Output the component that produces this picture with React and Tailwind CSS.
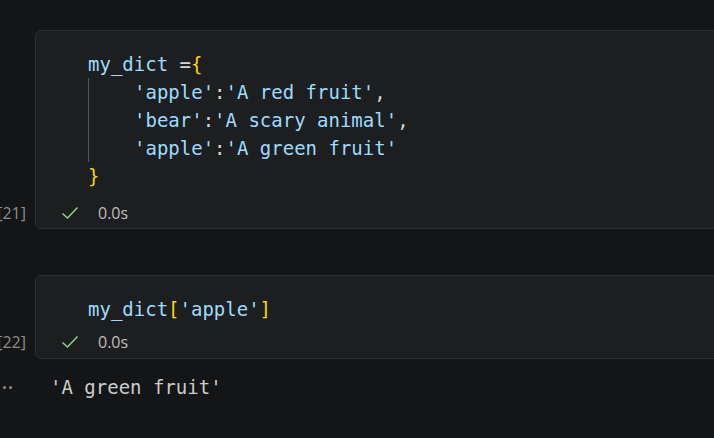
import React from "react";

const mono = { fontFamily: '"DejaVu Sans Mono", monospace' };

function Check() {
  return (
    <svg width="18" height="14" viewBox="0 0 18 14" fill="none">
      <path d="M1.5 7.5 L6.5 12 L16.5 1.5" stroke="#89d185" strokeWidth="1.6" />
    </svg>
  );
}

function Status({ count }) {
  return (
    <div className="flex items-center h-[24px]">
      <div className="w-[35px] -ml-[35px] flex justify-end pr-[10px] whitespace-nowrap text-[16px] text-[#8c8c8c] font-['Open_Sans',sans-serif]">
        [{count}]
      </div>
      <div className="pl-[25px] flex items-center">
        <Check />
        <span className="ml-[19px] text-[16px] text-[#bdbdbd] font-['Open_Sans',sans-serif]">0.0s</span>
      </div>
    </div>
  );
}

const B = ({ children }) => <span className="text-[#ffd700]">{children}</span>;
const S = ({ children }) => <span className="text-[#9cdcfe]">{children}</span>;
const P = ({ children }) => <span className="text-[#d4d4d4]">{children}</span>;

export default function App() {
  return (
    <div className="w-[714px] h-[438px] overflow-hidden bg-[#141517] pt-[30px]">
      {/* cell 21 */}
      <div className="ml-[35px] -mr-[20px] rounded-[6px] border border-[#2c2d30] bg-[#1d1e20] pb-[3px]">
        <div className="pl-[52px] pt-[19px] text-[19px] leading-[28px] whitespace-pre" style={mono}>
          <div>
            <S>my_dict</S> <P>=</P>
            <B>{"{"}</B>
          </div>
          <div className="border-l border-[#585858] pl-[45px]">
            <S>'apple'</S>
            <P>:</P>
            <S>'A red fruit'</S>
            <P>,</P>
          </div>
          <div className="border-l border-[#585858] pl-[45px]">
            <S>'bear'</S>
            <P>:</P>
            <S>'A scary animal'</S>
            <P>,</P>
          </div>
          <div className="border-l border-[#585858] pl-[45px]">
            <S>'apple'</S>
            <P>:</P>
            <S>'A green fruit'</S>
          </div>
          <div>
            <B>{"}"}</B>
          </div>
        </div>
        <div className="mt-[11px]">
          <Status count={21} />
        </div>
      </div>

      {/* cell 22 */}
      <div className="mt-[46px] ml-[35px] -mr-[20px] rounded-[6px] border border-[#2c2d30] bg-[#1d1e20] pb-[4px]">
        <div className="pl-[52px] pt-[19px] text-[19px] leading-[28px] whitespace-pre" style={mono}>
          <div>
            <S>my_dict</S>
            <B>[</B>
            <S>'apple'</S>
            <B>]</B>
          </div>
        </div>
        <div className="mt-[7px]">
          <Status count={22} />
        </div>
      </div>

      {/* output */}
      <div className="flex items-center h-[28px] mt-[14px]">
        <div className="w-[50px] flex pl-[3px] gap-[3px] items-center">
          <span className="w-[3px] h-[3px] rounded-full bg-[#8c8c8c]" />
          <span className="w-[3px] h-[3px] rounded-full bg-[#8c8c8c]" />
        </div>
        <span className="text-[19px] text-[#cccccc] whitespace-pre" style={mono}>
          'A green fruit'
        </span>
      </div>
    </div>
  );
}
